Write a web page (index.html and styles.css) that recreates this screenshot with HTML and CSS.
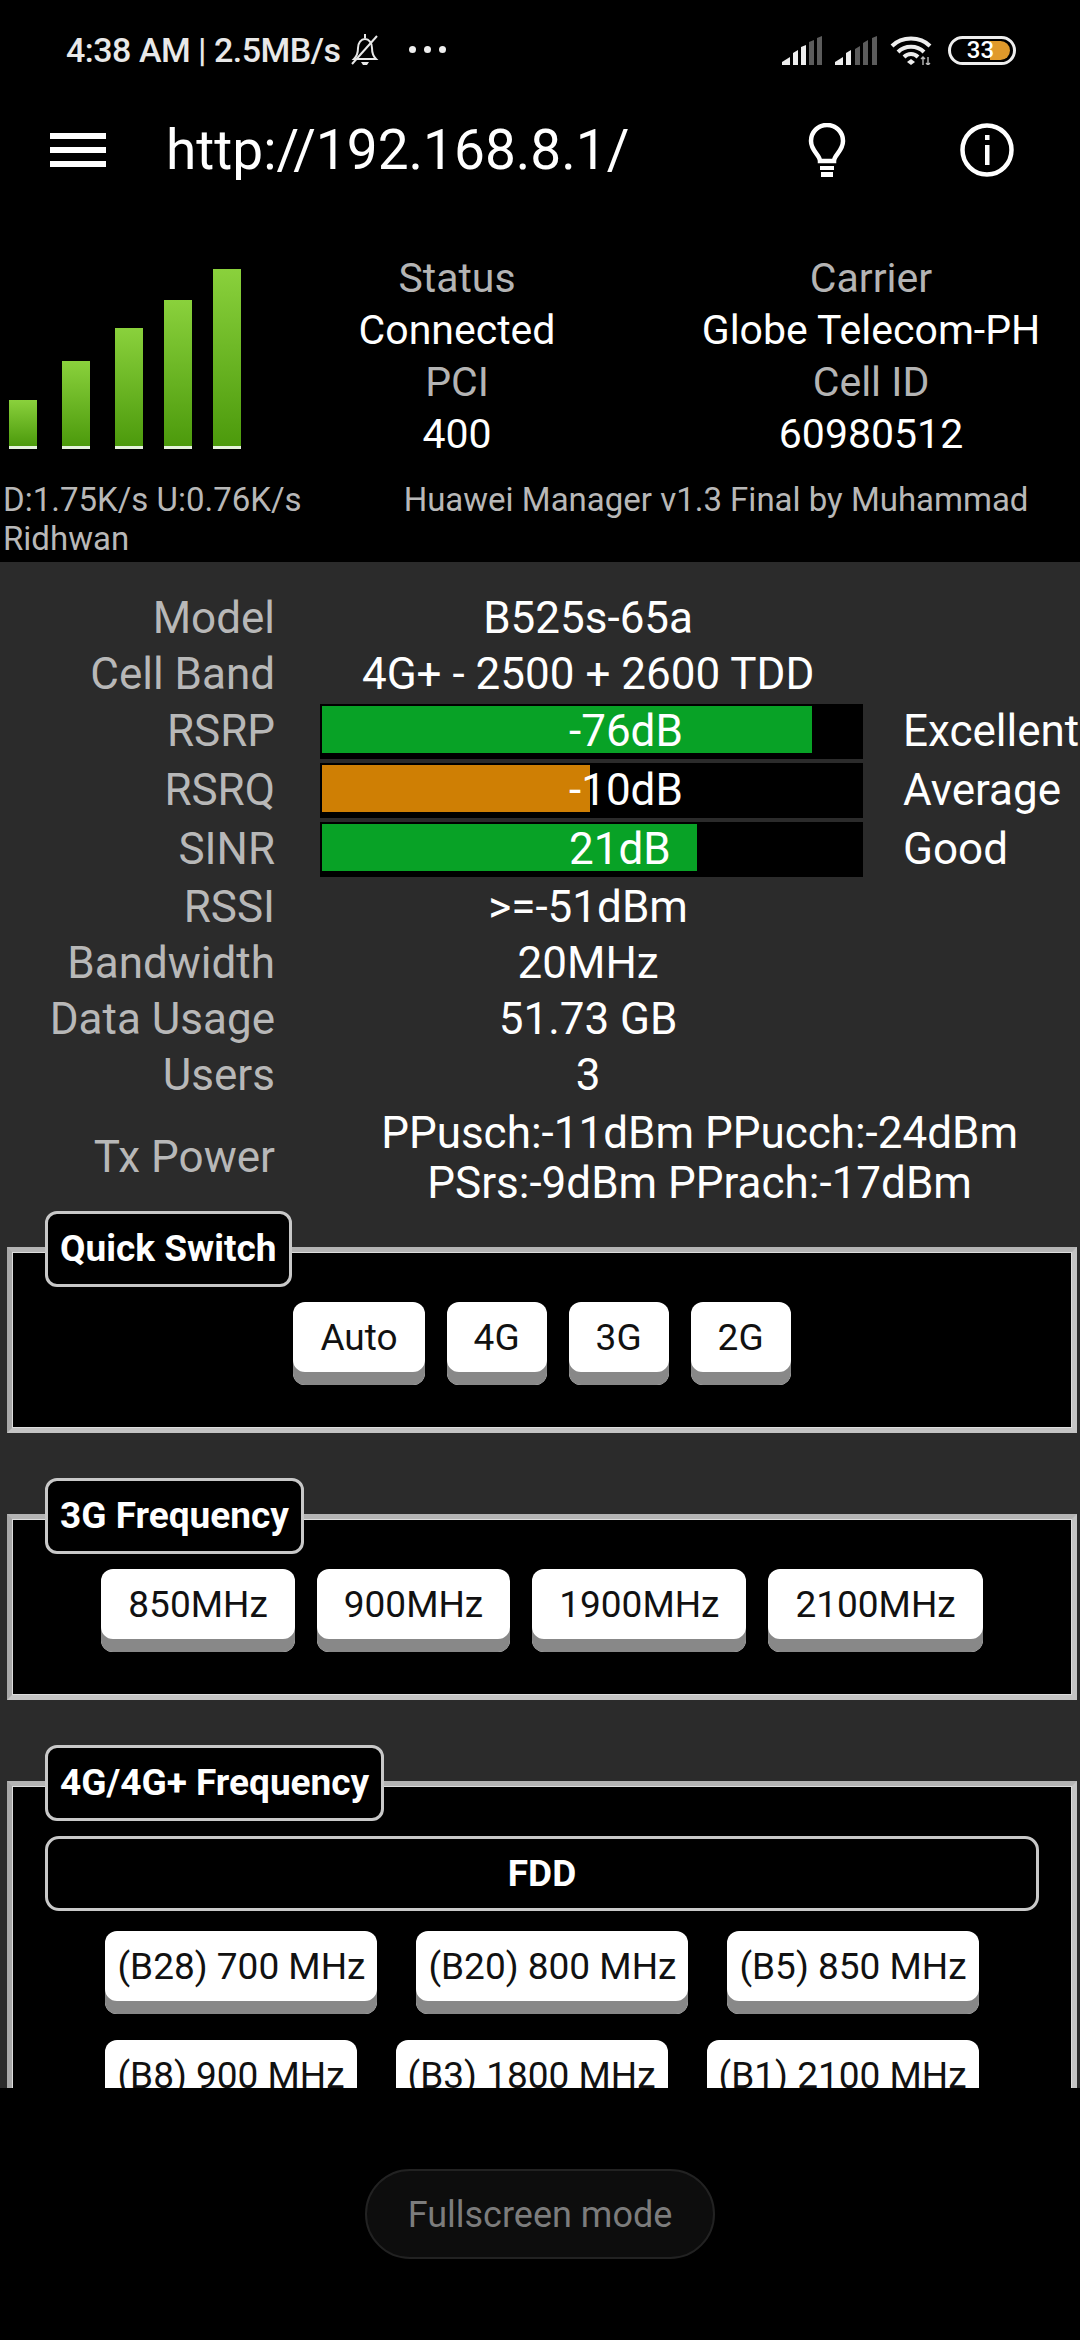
FILE: index.html
```html
<!DOCTYPE html>
<html lang="en">
<head>
  <meta charset="UTF-8" />
  <meta name="viewport" content="width=device-width, initial-scale=1.0" />
  <title>Huawei Manager</title>
  <link rel="stylesheet" href="styles.css">
</head>
<body>
  <!-- Phone status bar -->
  <div class="statusbar">
    <span class="clock">4:38 AM | 2.5MB/s</span>
    <svg class="bell" viewBox="0 0 30 34" width="30" height="34">
      <path d="M4 26c3-3 4-6 4-11 0-5 3-9 7-9s7 4 7 9c0 5 1 8 4 11z" fill="none" stroke="#e8e8e8" stroke-width="2"/>
      <path d="M14 1h2v4h-2zM11 29h8l-2 3h-4z" fill="#e8e8e8"/>
      <path d="M2 31 27 3" stroke="#e8e8e8" stroke-width="2"/>
    </svg>
    <span class="dots"><i></i><i></i><i></i></span>
    <span class="status-icons">
      <svg viewBox="0 0 40 29" width="40" height="29">
        <path d="M0 29v-3l8-5v8z" fill="#eee"/>
        <path d="M11 29V17l5-3v15zM19 29V11l5-2v20z" fill="#eee"/>
        <path d="M27 29V6l5-2v25zM35 29V2l5-2v29z" fill="#5c5c5c"/>
      </svg>
      <svg viewBox="0 0 42 29" width="42" height="29">
        <path d="M0 29v-3l8-5v8z" fill="#eee"/>
        <path d="M11 29V17l5-3v15z" fill="#eee"/>
        <path d="M20 29V13l5-3v19zM28 29V7l5-3v25zM37 29V2l5-2v29z" fill="#5c5c5c"/>
      </svg>
      <svg viewBox="0 0 42 30" width="42" height="30">
        <path d="M2 11C12 1 30 1 40 11M8 17c7-7 19-7 26 0M14 22c4-4 10-4 14 0" fill="none" stroke="#eee" stroke-width="4"/>
        <path d="M21 24l4 3-4 3-4-3z" fill="#eee"/>
        <path d="M33 22v8M31 24l2-2 2 2M38 30v-8M36 28l2 2 2-2" fill="none" stroke="#bbb" stroke-width="1.4"/>
      </svg>
      <span class="battery"><span class="battery-fill"></span><span class="battery-num">33</span></span>
    </span>
  </div>

  <!-- Toolbar -->
  <div class="toolbar">
    <div class="menu"><i></i><i></i><i></i></div>
    <div class="url">http://192.168.8.1/</div>
    <svg class="bulb" viewBox="0 0 38 54" width="38" height="54">
      <path d="M12 38c0-6-9-10-9-20C3 9 10 2 19 2s16 7 16 16c0 10-9 14-9 20z" fill="none" stroke="#fff" stroke-width="4.500"/>
      <path d="M12 43h14v4H12zM13 49h12v5H13z" fill="#fff"/>
    </svg>
    <svg class="info" viewBox="0 0 54 54" width="54" height="54">
      <circle cx="27" cy="27" r="24.500" fill="none" stroke="#fff" stroke-width="4.500"/>
      <path d="M25 12h4.500v5H25zM25 22h4.500v20H25z" fill="#fff"/>
    </svg>
  </div>

  <!-- Signal summary -->
  <div class="summary">
    <div class="summary-top">
      <div class="signal">
        <div class="sig-bar sig-1"></div>
        <div class="sig-bar sig-2"></div>
        <div class="sig-bar sig-3"></div>
        <div class="sig-bar sig-4"></div>
        <div class="sig-bar sig-5"></div>
      </div>
      <div class="info-col col-a">
        <div class="muted">Status</div>
        <div>Connected</div>
        <div class="muted">PCI</div>
        <div>400</div>
      </div>
      <div class="info-col col-b">
        <div class="muted">Carrier</div>
        <div>Globe Telecom-PH</div>
        <div class="muted">Cell ID</div>
        <div>60980512</div>
      </div>
    </div>
    <div class="speed-row">
      <span class="speed">D:1.75K/s U:0.76K/s</span>
      <span class="credit">Huawei Manager v1.3 Final by Muhammad</span>
    </div>
    <div class="speed-row2">Ridhwan</div>
  </div>

  <!-- Scrolling content -->
  <div class="content">
    <div class="stats">
      <div class="lbl">Model</div><div class="val wide-2">B525s-65a</div>
      <div class="lbl">Cell Band</div><div class="val wide-2">4G+ - 2500 + 2600 TDD</div>

      <div class="lbl bar-row">RSRP</div>
      <div class="meter"><div class="meter-fill green" style="width: 90.900%"></div><span class="meter-text">-76dB</span></div>
      <div class="grade">Excellent</div>

      <div class="lbl bar-row">RSRQ</div>
      <div class="meter"><div class="meter-fill amber" style="width: 49.700%"></div><span class="meter-text">-10dB</span></div>
      <div class="grade">Average</div>

      <div class="lbl bar-row">SINR</div>
      <div class="meter"><div class="meter-fill green" style="width: 69.600%"></div><span class="meter-text">21dB</span></div>
      <div class="grade">Good</div>

      <div class="lbl">RSSI</div><div class="val wide-2">&gt;=-51dBm</div>
      <div class="lbl">Bandwidth</div><div class="val wide-2">20MHz</div>
      <div class="lbl">Data Usage</div><div class="val wide-2">51.73 GB</div>
      <div class="lbl">Users</div><div class="val wide-2">3</div>

      <div class="lbl">Tx Power</div>
      <div class="val tx">PPusch:-11dBm PPucch:-24dBm<br>PSrs:-9dBm PPrach:-17dBm</div>
    </div>

    <section class="group">
      <div class="legend">Quick Switch</div>
      <div class="btn-row first">
        <button class="key">Auto</button>
        <button class="key">4G</button>
        <button class="key">3G</button>
        <button class="key">2G</button>
      </div>
    </section>

    <section class="group">
      <div class="legend">3G Frequency</div>
      <div class="btn-row first">
        <button class="key">850MHz</button>
        <button class="key">900MHz</button>
        <button class="key">1900MHz</button>
        <button class="key">2100MHz</button>
      </div>
    </section>

    <section class="group">
      <div class="legend">4G/4G+ Frequency</div>
      <div class="subhead">FDD</div>
      <div class="btn-row band-row">
        <button class="key tight">(B28) 700 MHz</button>
        <button class="key tight">(B20) 800 MHz</button>
        <button class="key tight">(B5) 850 MHz</button>
      </div>
      <div class="btn-row band-row">
        <button class="key tight">(B8) 900 MHz</button>
        <button class="key tight">(B3) 1800 MHz</button>
        <button class="key tight">(B1) 2100 MHz</button>
      </div>
    </section>
  </div>

  <!-- Bottom area with the toast -->
  <div class="footer">
    <div class="toast">Fullscreen mode</div>
  </div>
</body>
</html>
```

FILE: styles.css
```css
/* Basic reset */
* {
  box-sizing: border-box;
  margin: 0;
  padding: 0;
}
body {
  width: 1080px;
  height: 2340px;
  overflow: hidden;
  background: #000;
  color: #fff;
  font-family: Roboto, 'Liberation Sans', sans-serif;
  display: flex;
  flex-direction: column;
}

/* Status bar */
.statusbar {
  height: 100px;
  flex: none;
  display: flex;
  align-items: center;
  padding-left: 66px;
  padding-right: 64px;
  color: #e8e8e8;
}
.clock {
  font-size: 34px;
  font-weight: 500;
  letter-spacing: -0.5px;
}
.bell {
  margin-left: 9px;
}
.dots {
  display: flex;
  gap: 8px;
  margin-left: 29px;
  margin-top: -2px;
}
.dots i {
  width: 7px;
  height: 7px;
  border-radius: 50%;
  background: #eee;
}
.status-icons {
  margin-left: auto;
  display: flex;
  align-items: center;
  gap: 13px;
}
.battery {
  width: 68px;
  height: 29px;
  border: 3px solid #eee;
  border-radius: 15px;
  position: relative;
  overflow: hidden;
  display: flex;
  justify-content: center;
  align-items: center;
  margin-left: 3px;
}
.battery-fill {
  position: absolute;
  top: 2px;
  bottom: 2px;
  right: 3px;
  width: 20px;
  border-radius: 0 10px 10px 0;
  background: #e09a2b;
}
.battery-num {
  position: relative;
  font-size: 24px;
  font-weight: 500;
  color: #fff;
  margin-left: -3px;
}

/* Toolbar */
.toolbar {
  height: 100px;
  flex: none;
  display: flex;
  align-items: center;
  padding-left: 50px;
  padding-right: 66px;
}
.menu {
  width: 56px;
  display: flex;
  flex-direction: column;
  gap: 8px;
}
.menu i {
  height: 6px;
  background: #fff;
}
.url {
  font-size: 55px;
  margin-left: 60px;
}
.bulb {
  margin-left: auto;
}
.info {
  margin-left: 114px;
}

/* Signal summary */
.summary {
  height: 362px;
  flex: none;
  padding-top: 52px;
}
.summary-top {
  display: flex;
  height: 208px;
}
.signal {
  width: 250px;
  padding-left: 9px;
  height: 197px;
  display: flex;
  align-items: flex-end;
  gap: 25px;
}
.sig-bar {
  width: 28px;
  background: linear-gradient(#8ad13c, #4c9a0c);
  border-bottom: 3px solid #e6f2dc;
}
.sig-1 { height: 49px; }
.sig-2 { height: 88px; }
.sig-3 { height: 121px; }
.sig-4 { height: 149px; margin-left: -4px; }
.sig-5 { height: 180px; margin-left: -4px; }
.info-col {
  text-align: center;
  font-size: 41px;
  line-height: 52px;
}
.col-a {
  width: 414px;
}
.col-b {
  width: 414px;
}
.muted {
  color: #b4b4b4;
}
.speed-row {
  display: flex;
  color: #b8b8b8;
  font-size: 33px;
  line-height: 38px;
  padding-left: 3px;
  margin-top: 21px;
}
.credit {
  margin-left: 102px;
  white-space: nowrap;
}
.speed-row2 {
  color: #b8b8b8;
  font-size: 33px;
  line-height: 38px;
  padding-left: 3px;
  margin-top: 1px;
}

/* Scrolling content */
.content {
  flex: 1;
  overflow: hidden;
  background: #2b2b2b;
  padding-top: 28px;
}
.stats {
  display: grid;
  grid-template-columns: 275px 543px 1fr;
  column-gap: 45px;
  font-size: 44px;
  margin-right: 3px;
  height: 619px;
}
.stats > div {
  line-height: 56px;
}
.lbl {
  text-align: right;
  color: #b8b8b8;
  white-space: nowrap;
}
.val {
  text-align: center;
}
.wide-2 {
  grid-column: 2 / 4;
  padding-right: 223px;
}
.stats .bar-row {
  line-height: 59px;
}
.meter {
  position: relative;
  height: 55px;
  margin: 2px 0;
  background: #000;
  padding: 2px;
}
.meter-fill {
  height: 47px;
}
.green {
  background: #08a226;
}
.amber {
  background: #cf7f04;
}
.stats .meter-text {
  position: absolute;
  top: 0;
  left: 249px;
  line-height: 55px;
}
.stats .grade {
  margin-left: -5px;
  line-height: 59px;
  white-space: nowrap;
}
.stats .tx {
  grid-column: 2 / 4;
  line-height: 50px;
  padding-top: 5px;
  white-space: nowrap;
}
.stats .lbl:nth-last-child(2) {
  line-height: 108px;
}

/* Group boxes */
.group {
  margin: 38px 3px 0 7px;
  background: #000;
  border: 5px solid #c4c4c4;
  border-left-color: #a8a8a8;
  border-top-color: #b4b4b4;
  padding-bottom: 43px;
  box-shadow: inset 0 0 0 1px #ddd;
}
.group + .group {
  margin-top: 81px;
}
.legend {
  display: inline-block;
  vertical-align: top;
  height: 76px;
  margin-top: -41px;
  margin-left: 33px;
  padding: 0 12px;
  background: #000;
  border: 3px solid #c8c8c8;
  border-radius: 12px;
  font-size: 37px;
  font-weight: 700;
  line-height: 70px;
  white-space: nowrap;
}
.btn-row {
  display: flex;
  justify-content: center;
  gap: 22px;
}
.first {
  margin-top: 15px;
}
.key {
  height: 83px;
  padding: 0 27px 13px;
  border: none;
  border-radius: 12px;
  background: #fff;
  color: #111;
  font-family: Roboto, 'Liberation Sans', sans-serif;
  font-size: 37px;
  box-shadow: inset 0 -13px 0 #888;
  white-space: nowrap;
}
.subhead {
  height: 75px;
  margin: 15px 33px 0 33px;
  border: 3px solid #c8c8c8;
  border-radius: 14px;
  text-align: center;
  font-size: 37px;
  font-weight: 700;
  line-height: 69px;
}
.band-row {
  gap: 39px;
  margin-top: 20px;
  margin-bottom: 26px;
}
.band-row + .band-row {
  margin-top: 0;
}
.tight {
  padding-left: 12px;
  padding-right: 12px;
}

/* Bottom area */
.footer {
  height: 252px;
  flex: none;
  background: #000;
  display: flex;
  justify-content: center;
  padding-top: 81px;
}
.toast {
  width: 350px;
  height: 90px;
  border: 2px solid #222;
  border-radius: 45px;
  background: #0d0d0d;
  color: #7c7c7c;
  font-size: 36px;
  line-height: 88px;
  text-align: center;
}
```
